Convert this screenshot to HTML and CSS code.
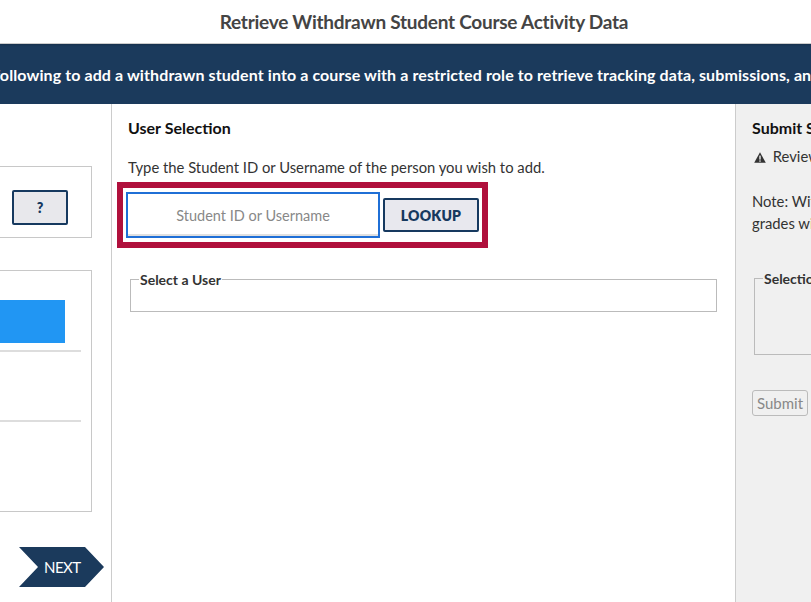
FILE: index.html
```html
<!DOCTYPE html>
<html lang="en">
<head>
<meta charset="utf-8">
<title>Retrieve Withdrawn Student Course Activity Data</title>
<link rel="stylesheet" href="styles.css">
</head>
<body>
<header class="page-title">Retrieve Withdrawn Student Course Activity Data</header>
<div class="banner"><p class="banner-text">Use the following to add a withdrawn student into a course with a restricted role to retrieve tracking data, submissions, and grades.</p></div>
<main class="cols">
  <aside class="left">
    <div class="box help-box"><button class="help-btn" type="button">?</button></div>
    <div class="box steps">
      <div class="step"><div class="step-active"></div></div>
      <div class="step step-tall"></div>
    </div>
    <div class="next-row"><a class="next" href="#">NEXT</a></div>
  </aside>
  <section class="middle">
    <h2 class="heading">User Selection</h2>
    <p class="hint">Type the Student ID or Username of the person you wish to add.</p>
    <div class="highlight">
      <input class="lookup-input" type="text" placeholder="Student ID or Username">
      <button class="lookup-btn" type="button">LOOKUP</button>
    </div>
    <fieldset class="group users">
      <legend class="group-legend">Select a User</legend>
    </fieldset>
  </section>
  <section class="right">
    <h2 class="heading">Submit Selection</h2>
    <p class="warn"><svg class="warn-icon" width="12" height="11" viewBox="0 0 12 11" aria-hidden="true"><path d="M6 0.3 L11.8 10.7 L0.2 10.7 Z" fill="#333"/><rect x="5.3" y="3.6" width="1.4" height="4" fill="#f0f0f0"/><rect x="5.3" y="8.4" width="1.4" height="1.3" fill="#f0f0f0"/></svg> Review your selection before submitting.</p>
    <p class="note">Note: Withdrawn students are added with a restricted role;<br>grades will not be visible to the student.</p>
    <fieldset class="group selection">
      <legend class="group-legend">Selection</legend>
    </fieldset>
    <button class="submit-btn" type="button" disabled>Submit</button>
  </section>
</main>
</body>
</html>
```

FILE: styles.css
```css
* { box-sizing: border-box; }
html, body { margin: 0; padding: 0; }
body {
  width: 811px;
  height: 602px;
  overflow: hidden;
  background: #fff;
  font-family: "Lato", "Open Sans", sans-serif;
  color: #333;
}
.page-title {
  height: 44px;
  line-height: 44px;
  padding-left: 37px;
  text-align: center;
  font-size: 19px;
  font-weight: 700;
  color: #444;
  letter-spacing: -0.25px;
  border-bottom: 1px solid #ccc;
  box-shadow: 0 1px 2px rgba(0,0,0,0.2);
  position: relative;
  z-index: 1;
}
.banner {
  height: 60px;
  background: #1b3a5c;
  display: flex;
  justify-content: center;
  align-items: center;
  overflow: hidden;
}
.banner-text {
  margin: 0;
  white-space: nowrap;
  flex: 0 0 auto;
  color: #fff;
  font-weight: 700;
  font-size: 16px;
  letter-spacing: 0.1px;
}
.cols {
  display: flex;
  height: 498px;
  overflow: hidden;
}
.left {
  flex: 0 0 112px;
  min-width: 0;
  overflow: hidden;
  border-right: 1px solid #ccc;
  display: flex;
  flex-direction: column;
  align-items: flex-end;
  padding-right: 19px;
}
.box {
  flex: 0 0 auto;
  width: 120px;
  border: 1px solid #c8c8c8;
}
.help-box {
  margin-top: 62px;
  height: 72px;
  padding: 23px 23px 0 0;
  display: flex;
  justify-content: flex-end;
  align-items: flex-start;
}
.help-btn {
  width: 56px;
  height: 35px;
  border: 2px solid #16395f;
  border-radius: 2px;
  background: #e8e8ec;
  color: #16395f;
  font-family: inherit;
  font-weight: 800;
  font-size: 14px;
  padding: 0;
}
.steps {
  margin-top: 32px;
  height: 242px;
  padding-top: 29px;
}
.step {
  width: 108px;
  border-bottom: 2px solid #ddd;
  height: 52px;
}
.step-active {
  width: 92px;
  height: 43px;
  background: #2196f3;
}
.step-tall { height: 70px; }
.next-row {
  margin-top: 35px;
  align-self: flex-start;
  padding-left: 19px;
}
.next {
  display: flex;
  align-items: center;
  width: 85px;
  height: 40px;
  padding-left: 25px;
  background: #1b3a5c;
  color: #fff;
  text-decoration: none;
  font-size: 15px;
  letter-spacing: -0.5px;
  clip-path: polygon(0 0, 66px 0, 85px 50%, 66px 100%, 0 100%, 19px 50%);
}
.middle {
  flex: 0 0 624px;
  min-width: 0;
  border-right: 1px solid #ccc;
  padding: 14px 18px 0 16px;
}
.heading {
  margin: 0;
  font-size: 16px;
  font-weight: 700;
  color: #111;
  line-height: 20px;
  white-space: nowrap;
}
.hint {
  margin: 20px 0 0;
  font-size: 14.8px;
  line-height: 18px;
  color: #333;
}
.highlight {
  display: flex;
  align-items: center;
  gap: 3px;
  width: 371px;
  height: 66px;
  margin: 6px 0 0 -11px;
  border: 6px solid #b0103c;
  padding: 0 3px;
}
.lookup-input {
  width: 254px;
  height: 46px;
  border: 2px solid #1f6fd6;
  box-shadow: inset 0 -2px 0 #e0e0e0;
  font-family: inherit;
  font-size: 14.5px;
  text-align: center;
  color: #333;
  outline: none;
  padding: 0;
}
.lookup-input::placeholder { color: #888; }
.lookup-btn {
  width: 96px;
  height: 34px;
  border: 2px solid #16395f;
  border-radius: 2px;
  background: #e8e8ee;
  color: #16395f;
  font-family: inherit;
  font-weight: 800;
  font-size: 14px;
  letter-spacing: 0.2px;
  padding: 0;
}
.group {
  margin: 0;
  border: 1px solid #bbb;
  padding: 0;
}
.users {
  margin: 23px 0 0 2px;
  width: 587px;
  height: 41px;
}
.group-legend {
  margin-left: 8px;
  padding: 0 1px;
  font-size: 14px;
  font-weight: 700;
  color: #333;
  white-space: nowrap;
}
.right {
  flex: 0 0 420px;
  min-width: 0;
  background: #f0f0f0;
  padding: 14px 0 0 16px;
}
.warn {
  margin: 9px 0 0;
  font-size: 14.8px;
  line-height: 18px;
  color: #333;
  white-space: nowrap;
}
.warn-icon { margin: 0 3px 0 2px; vertical-align: -1px; }
.note {
  margin: 25px 0 0;
  font-size: 14.8px;
  line-height: 22px;
  color: #333;
  white-space: nowrap;
}
.selection {
  margin: 36px 0 0 2px;
  width: 280px;
  height: 85px;
}
.submit-btn {
  display: block;
  margin-top: 35px;
  width: 56px;
  height: 26px;
  border: 1px solid #bbb;
  border-radius: 3px;
  background: #f0f0f0;
  color: #888;
  font-family: inherit;
  font-size: 15px;
  padding: 0;
}
```
